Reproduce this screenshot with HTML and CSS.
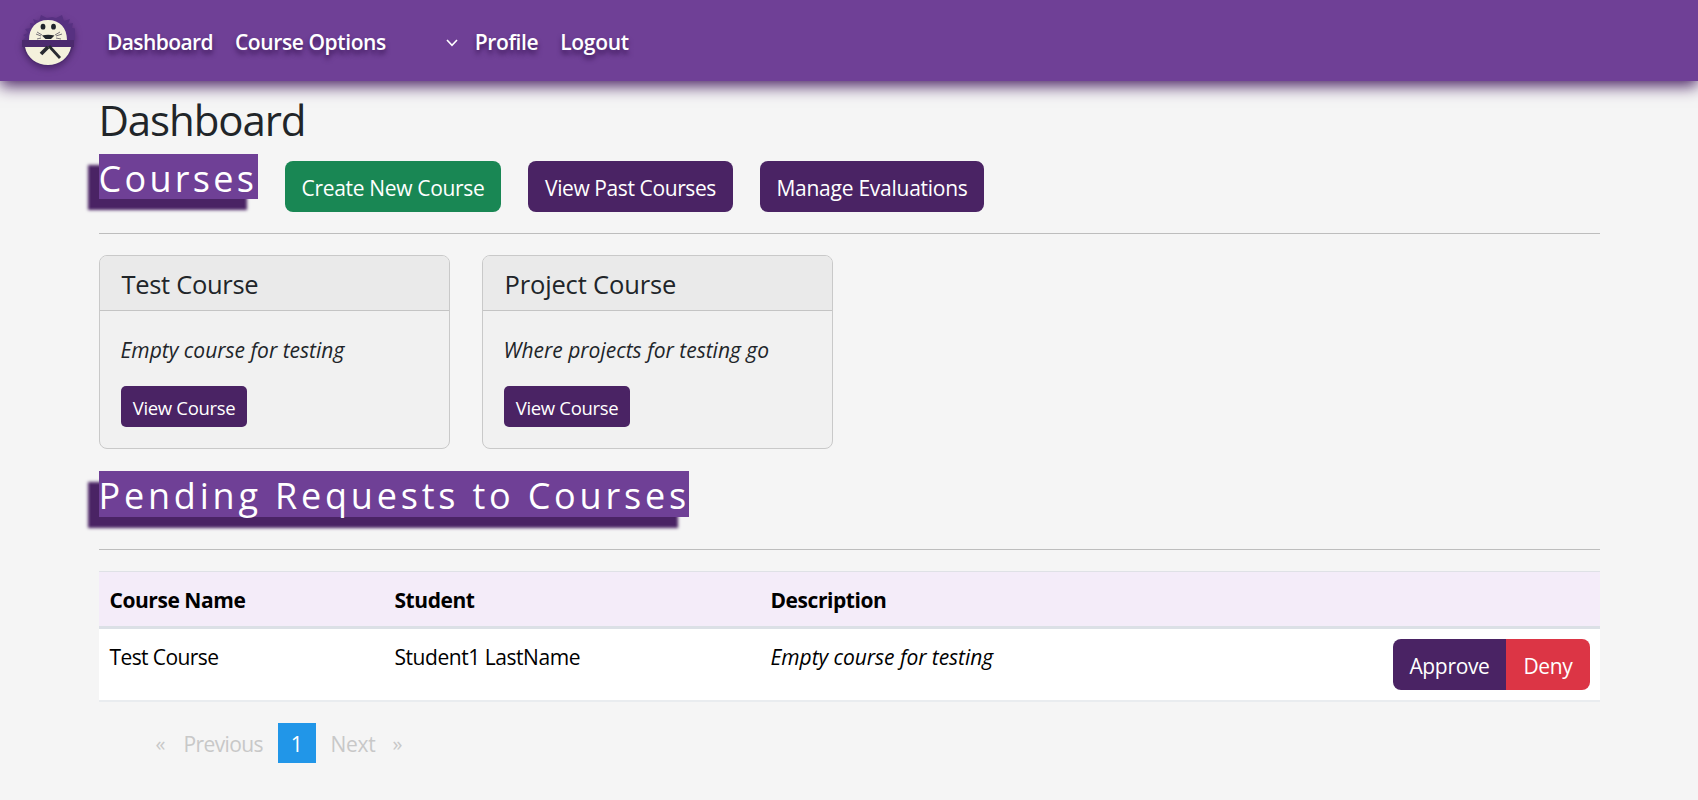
FILE: index.html
```html
<!DOCTYPE html>
<html lang="en">
<head>
<meta charset="utf-8">
<title>Dashboard</title>
<link rel="stylesheet" href="styles.css">
</head>
<body>
<nav class="navbar">
  <svg class="logo" viewBox="0 0 54 56" aria-label="Logo">
    <path d="M1 26 5 22 2 20l5-2-3-4 6-1-1-5 5 1-2-5 6 2 2-6 6 3 5-1 4 1 6-3 2 6 6-2-2 5 5-1-1 5 5 1-2 4 4 2-3 2 4 4z" fill="#573181"/>
    <path d="M1 25h52a26 26 0 0 1-52 0z" fill="#4d2c70"/>
    <path d="M8 25C8 13 15 5 27 5s19 8 19 20zM4 32h46C48 43 38 50 27 50S6 43 4 32z" fill="#f4f1dc"/>
    <path d="M1 25h52v7H1z" fill="#4c2a6e"/>
    <ellipse cx="22" cy="11.7" rx="2.4" ry="2.9" fill="#20242b"/>
    <ellipse cx="32.5" cy="11.7" rx="2.4" ry="2.9" fill="#20242b"/>
    <path d="M21 20.5q6-1.500 12.500 0l-3.500 3.500h-5.500z" fill="#20242b"/>
    <path d="m21 20-5-3m4 4-5-2m5 4-4 1m18-4 5-3m-4 4 6-2m-6 4 5 1" stroke="#77737a" stroke-width="1"/>
    <path d="m27 32-7 7" stroke="#292b31" stroke-width="3.8"/>
    <path d="m28 31 11 12" stroke="#292b31" stroke-width="2.8"/>
  </svg>
  <a class="nav-link home">Dashboard</a>
  <a class="nav-link options">Course Options</a>
  <svg class="chevron" viewBox="0 0 12 8"><path d="m1 1 5 5.4L11 1" fill="none" stroke="#fff" stroke-width="1.6"/></svg>
  <a class="nav-link profile">Profile</a>
  <a class="nav-link">Logout</a>
</nav>

<main class="container">
  <h1 class="page-title">Dashboard</h1>
  <section class="toolbar">
    <h2 class="banner">Courses</h2>
    <button class="btn success">Create New Course</button>
    <button class="btn past">View Past Courses</button>
    <button class="btn manage">Manage Evaluations</button>
  </section>
  <section class="cards">
    <article class="card">
      <h3 class="card-header">Test Course</h3>
      <div class="card-body">
        <p class="card-text">Empty course for testing</p>
        <button class="btn small">View Course</button>
      </div>
    </article>
    <article class="card">
      <h3 class="card-header wide">Project Course</h3>
      <div class="card-body">
        <p class="card-text">Where projects for testing go</p>
        <button class="btn small">View Course</button>
      </div>
    </article>
  </section>
  <section class="pending">
    <h2 class="banner requests">Pending Requests to Courses</h2>
  </section>
  <div class="table">
    <div class="row head">
      <span>Course Name</span><span>Student</span><span>Description</span><span></span>
    </div>
    <div class="row">
      <span class="tight">Test Course</span><span>Student1 LastName</span><em>Empty course for testing</em>
      <div class="btn-group"><button class="btn approve">Approve</button><button class="btn deny">Deny</button></div>
    </div>
  </div>
  <div class="pagination">
    <span class="mark">«</span><span class="prev">Previous</span><span class="current">1</span><span class="next">Next</span><span class="mark">»</span>
  </div>
</main>
</body>
</html>
```
FILE: styles.css
```css
* { box-sizing: border-box; }
body {
  margin: 0;
  background: #f5f5f5;
  color: #212529;
  font: 21px/32px "Open Sans", "Noto Sans", sans-serif;
  letter-spacing: -0.3px;
}
h1, h2, h3, p { margin: 0; font-weight: 400; }

.navbar {
  display: flex;
  align-items: center;
  height: 81px;
  padding-left: 21px;
  background: #6f4096;
  box-shadow: 0 5px 15px #4a2364;
}
.logo {
  width: 54px;
  height: 56px;
  margin-top: 5px;
  filter: drop-shadow(0 3px 3px rgba(50, 20, 75, 0.55));
}
.nav-link {
  margin-right: 22px;
  padding-top: 2px;
  color: #fff;
  font-weight: 600;
  text-shadow: 0 4px 5px #3c1858;
}
.home { margin-left: 32px; letter-spacing: -0.6px; }
.options { margin-right: 60px; letter-spacing: -0.4px; }
.chevron { width: 12px; height: 8px; margin: 4px 17px 0 0; }
.profile { letter-spacing: -0.4px; margin-right: 22px; }

.container { width: 1501px; margin: 13px auto 0; }
.page-title { font-size: 42px; line-height: 52px; letter-spacing: -1.1px; }

.toolbar {
  display: flex;
  align-items: flex-start;
  height: 80px;
  margin-top: 8px;
  border-bottom: 1px solid #bdbdbd;
}
.banner {
  width: 159px;
  height: 45px;
  margin-right: 27px;
  padding-top: 3px;
  background: #6f4096;
  box-shadow: -11px 11px 3px #4a2364;
  color: #fff;
  font-size: 36px;
  line-height: 43px;
  letter-spacing: 3.3px;
  white-space: nowrap;
}
.btn {
  height: 51px;
  padding: 3px 0 0 1px;
  border: 0;
  border-radius: 8px;
  background: #4a2364;
  color: #fff;
  font: inherit;
  letter-spacing: -0.33px;
  text-align: center;
}
.toolbar .btn { margin: 7px 27px 0 0; }
.toolbar .success { width: 216px; background: #198754; }
.toolbar .past { width: 205px; letter-spacing: -0.4px; }
.toolbar .manage { width: 224px; letter-spacing: -0.25px; }

.cards { display: flex; gap: 32px; margin-top: 21px; }
.card {
  width: 351px;
  height: 194px;
  border: 1px solid #c9c9c9;
  border-radius: 8px;
  background: #f1f1f1;
  overflow: hidden;
}
.card-header {
  height: 55px;
  padding: 2px 22px 0;
  border-bottom: 1px solid #c4c4c4;
  background: #eaeaea;
  font-size: 25.5px;
  line-height: 53px;
  letter-spacing: -0.3px;
}
.wide { letter-spacing: -0.15px; }
.card-body { padding: 23px 21px 0; }
.card-text { font-style: italic; letter-spacing: 0; }
.small {
  display: block;
  width: 126px;
  height: 41px;
  margin-top: 20px;
  border-radius: 5px;
  font-size: 18.5px;
}

.pending { height: 79px; margin-top: 22px; border-bottom: 1px solid #bdbdbd; }
.requests { width: 590px; height: 46px; line-height: 44px; letter-spacing: 3.8px; }

.table { margin-top: 21px; border-top: 1px solid #dfe1e6; color: #000; }
.row {
  display: grid;
  grid-template-columns: 285px 376px 1fr auto;
  align-items: start;
  height: 73px;
  padding: 12px 10px 0 11px;
  border-bottom: 2px solid #e9ecef;
  background: #fff;
  letter-spacing: -0.45px;
}
.head {
  height: 57px;
  border-bottom: 3px solid #dbe0e6;
  background: #f4ecf9;
  font-weight: 700;
}
.row em { letter-spacing: -0.05px; }
.row .tight { letter-spacing: -0.6px; }
.btn-group { display: flex; margin-top: -2px; }
.approve { width: 113px; border-radius: 8px 0 0 8px; }
.deny { width: 84px; border-radius: 0 8px 8px 0; background: #dc3545; }

.pagination {
  display: flex;
  height: 40px;
  margin: 21px 0 0 57px;
  color: #c8c8c8;
  line-height: 42px;
}
.mark { width: 10px; font-size: 20px; }
.prev { width: 94px; margin-left: 18px; letter-spacing: -0.6px; }
.current { width: 38px; background: #2196e8; color: #fff; text-align: center; }
.next { width: 62px; margin-left: 15px; }
```
